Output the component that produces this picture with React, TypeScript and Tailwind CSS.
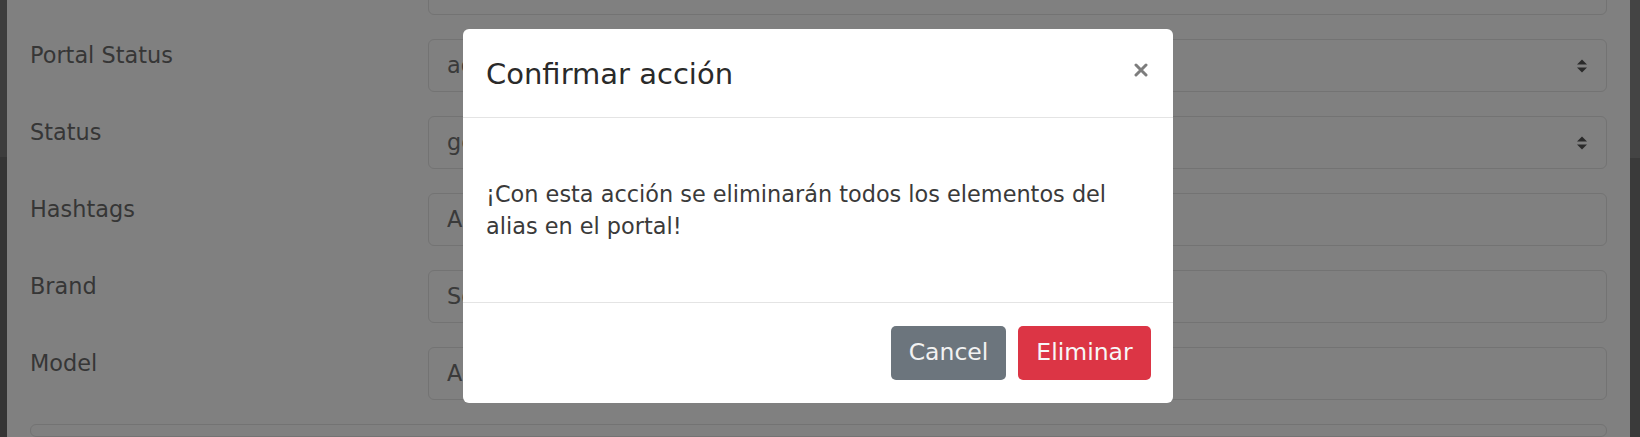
import React from "react";

function Chevrons() {
  return (
    <svg width="12" height="16" viewBox="0 0 12 16" className="shrink-0">
      <path d="M1 6.5 L6 1.5 L11 6.5 Z" fill="#2a2a2a" />
      <path d="M1 9.5 L6 14.5 L11 9.5 Z" fill="#2a2a2a" />
    </svg>
  );
}

function Field({ label, value, select }: { label: string; value: string; select?: boolean }) {
  return (
    <div className="flex items-start h-[53px]">
      <div className="w-[398px] shrink-0 text-[22.4px] leading-[32px] text-[#363636]">{label}</div>
      <div className="flex-1 h-[53px] rounded-[6px] border border-[#737373] flex items-center pl-[18px] pr-[18px] text-[22.4px] text-[#3a3a3a]">
        <span className="flex-1">{value}</span>
        {select && <Chevrons />}
      </div>
    </div>
  );
}

export default function App() {
  return (
    <div
      className="w-[1640px] h-[437px] bg-[#808080] flex overflow-hidden relative"
      style={{ fontFamily: "'DejaVu Sans', Inter, sans-serif" }}
    >
      <div className="w-[7px] shrink-0 flex flex-col">
        <div className="h-[157px] bg-[#3d3d3d]" />
        <div className="flex-1 bg-[#353535]" />
      </div>
      <div className="flex-1 pl-[23px] pr-[23px] flex flex-col gap-[24px] -mt-[38px]">
        <Field label="" value="" />
        <Field label="Portal Status" value="active" select />
        <Field label="Status" value="general" select />
        <Field label="Hashtags" value="Add hashtags" />
        <Field label="Brand" value="Select brand" />
        <Field label="Model" value="Add model" />
        <div className="h-[80px] rounded-[6px] border border-[#737373]" />
      </div>
      <div className="w-[10px] shrink-0 flex flex-col">
        <div className="h-[158px] bg-[#444444]" />
        <div className="flex-1 bg-[#3a3a3a]" />
      </div>

      <div className="absolute left-[463px] top-[29px] w-[710px] h-[374px] bg-white rounded-[6px] flex flex-col">
        <div className="h-[89px] border-b border-[#e4e4e4] flex items-center justify-between pl-[23px] pr-[25px]">
          <div className="text-[29px] leading-[32px] text-[#2a2a2a] pt-[2px]">Confirmar acción</div>
          <svg width="14" height="14" viewBox="0 0 14 14" className="-mt-[6px]">
            <path d="M2 2 L12 12 M12 2 L2 12" stroke="#7d7d7d" strokeWidth="3" strokeLinecap="round" />
          </svg>
        </div>
        <div className="h-[185px] border-b border-[#e4e4e4] pl-[23px] pr-[23px] pt-[60px] text-[22.4px] leading-[32px] text-[#3a3a3a]">
          ¡Con esta acción se eliminarán todos los elementos del
          <br />
          alias en el portal!
        </div>
        <div className="flex-1 flex justify-end items-start pt-[23px] pr-[22px] gap-[12px]">
          <button className="h-[54px] w-[115px] rounded-[5px] bg-[#6c757d] text-[#f2f2f2] text-[23.5px]">Cancel</button>
          <button className="h-[54px] w-[133px] rounded-[5px] bg-[#dc3545] text-[#f7f7f7] text-[23.5px]">Eliminar</button>
        </div>
      </div>
    </div>
  );
}
